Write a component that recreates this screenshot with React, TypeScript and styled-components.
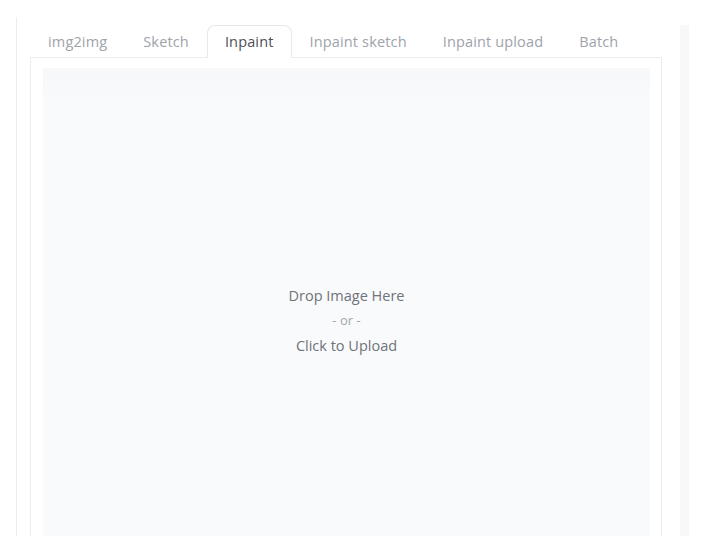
import React, { useState } from "react";
import styled, { createGlobalStyle } from "styled-components";

const GlobalStyle = createGlobalStyle`
  html, body {
    margin: 0;
    padding: 0;
    background: #ffffff;
    font-family: "Open Sans", "Noto Sans", sans-serif;
  }
`;

const tabNames = [
  "img2img",
  "Sketch",
  "Inpaint",
  "Inpaint sketch",
  "Inpaint upload",
  "Batch",
];

const Page = styled.div`
  width: 703px;
  height: 553px;
  display: flex;
  padding: 17px 0 0 16px;
  box-sizing: border-box;
  overflow: hidden;
`;

const Column = styled.div`
  width: 646px;
  height: 519px;
  border-left: 1px solid #ececee;
  padding: 8px 0 0 13px;
  box-sizing: border-box;
  display: flex;
  flex-direction: column;
`;

const SideStrip = styled.div`
  width: 9px;
  height: 511px;
  margin: 8px 0 0 18px;
  background: #f8f8f9;
`;

const TabRow = styled.div`
  display: flex;
  position: relative;
  z-index: 1;
  margin-bottom: -1px;
`;

const Tab = styled.button<{ $active?: boolean }>`
  appearance: none;
  height: 33px;
  padding: 0 17px;
  box-sizing: border-box;
  font-family: "Open Sans", "Noto Sans", sans-serif;
  font-size: 14.5px;
  letter-spacing: 0.15px;
  color: ${(p) => (p.$active ? "#4b4f57" : "#9ea3ab")};
  background: ${(p) => (p.$active ? "#ffffff" : "transparent")};
  border: 1px solid ${(p) => (p.$active ? "#e7e8eb" : "transparent")};
  border-bottom-color: ${(p) => (p.$active ? "#ffffff" : "transparent")};
  border-radius: 8px 8px 0 0;
  cursor: pointer;
  white-space: nowrap;
`;

const Panel = styled.div`
  flex: 1;
  width: 632px;
  border: 1px solid #ecedef;
  border-bottom: none;
  padding: 10px 11px 0 12px;
  box-sizing: border-box;
  display: flex;
`;

const DropZone = styled.div`
  flex: 1;
  background: linear-gradient(180deg, #f6f8fa 0%, #f9fafb 8%, #f9fafb 100%);
  display: flex;
  flex-direction: column;
  align-items: center;
  justify-content: center;
  padding-top: 36px;
  box-sizing: border-box;
  cursor: pointer;
`;

const DropLine = styled.div<{ $small?: boolean }>`
  font-size: ${(p) => (p.$small ? "13px" : "14.5px")};
  line-height: 25px;
  color: ${(p) => (p.$small ? "#a4a8ae" : "#6f737a")};
`;

export default function App() {
  const [active, setActive] = useState(2);
  return (
    <>
      <GlobalStyle />
      <Page>
        <Column>
          <TabRow>
            {tabNames.map((name, i) => (
              <Tab key={name} $active={i === active} onClick={() => setActive(i)}>
                {name}
              </Tab>
            ))}
          </TabRow>
          <Panel>
            <DropZone>
              <DropLine>Drop Image Here</DropLine>
              <DropLine $small>- or -</DropLine>
              <DropLine>Click to Upload</DropLine>
            </DropZone>
          </Panel>
        </Column>
        <SideStrip />
      </Page>
    </>
  );
}
